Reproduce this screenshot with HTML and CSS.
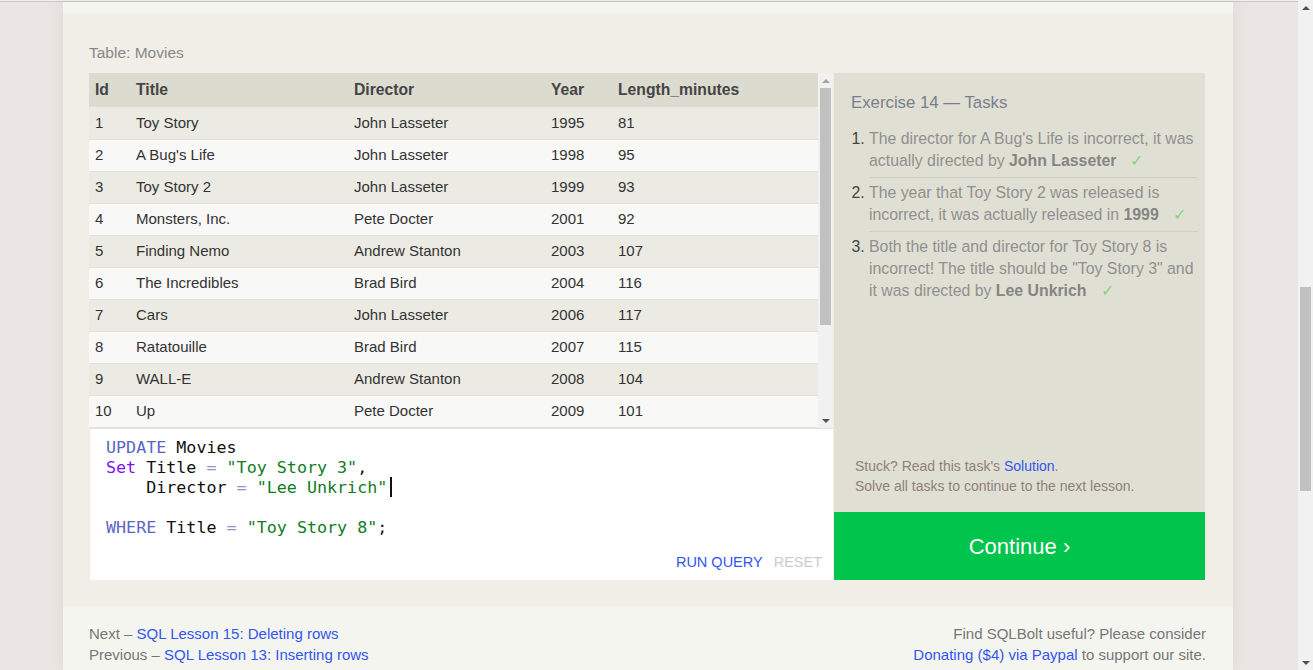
FILE: index.html
```html
<!DOCTYPE html>
<html lang="en">
<head>
<meta charset="utf-8">
<title>SQLBolt - Lesson 14</title>
<link rel="stylesheet" href="styles.css">
</head>
<body>
<div class="viewport">
  <div class="topline"></div>
  <div class="container">
    <div class="lesson">
      <div class="table-label">Table: Movies</div>
      <div class="exercise">
        <div class="left">
          <div class="tablewrap">
            <div class="tableclip">
              <table class="movies">
                <colgroup>
                  <col class="c-id"><col class="c-title"><col class="c-dir"><col class="c-year"><col>
                </colgroup>
                <thead>
                  <tr><th>Id</th><th>Title</th><th>Director</th><th>Year</th><th>Length_minutes</th></tr>
                </thead>
                <tbody>
                  <tr><td>1</td><td>Toy Story</td><td>John Lasseter</td><td>1995</td><td>81</td></tr>
                  <tr><td>2</td><td>A Bug's Life</td><td>John Lasseter</td><td>1998</td><td>95</td></tr>
                  <tr><td>3</td><td>Toy Story 2</td><td>John Lasseter</td><td>1999</td><td>93</td></tr>
                  <tr><td>4</td><td>Monsters, Inc.</td><td>Pete Docter</td><td>2001</td><td>92</td></tr>
                  <tr><td>5</td><td>Finding Nemo</td><td>Andrew Stanton</td><td>2003</td><td>107</td></tr>
                  <tr><td>6</td><td>The Incredibles</td><td>Brad Bird</td><td>2004</td><td>116</td></tr>
                  <tr><td>7</td><td>Cars</td><td>John Lasseter</td><td>2006</td><td>117</td></tr>
                  <tr><td>8</td><td>Ratatouille</td><td>Brad Bird</td><td>2007</td><td>115</td></tr>
                  <tr><td>9</td><td>WALL-E</td><td>Andrew Stanton</td><td>2008</td><td>104</td></tr>
                  <tr><td>10</td><td>Up</td><td>Pete Docter</td><td>2009</td><td>101</td></tr>
                  <tr><td>11</td><td>Toy Story 8</td><td>El Directore</td><td>2010</td><td>103</td></tr>
                  <tr><td>12</td><td>Cars 2</td><td>John Lasseter</td><td>2011</td><td>120</td></tr>
                  <tr><td>13</td><td>Brave</td><td>Brenda Chapman</td><td>2012</td><td>102</td></tr>
                  <tr><td>14</td><td>Monsters University</td><td>Dan Scanlon</td><td>2013</td><td>110</td></tr>
                </tbody>
              </table>
            </div>
            <div class="vscroll table-scroll">
              <div class="arrow up dim"></div>
              <div class="track"><div class="thumb"></div></div>
              <div class="arrow down"></div>
            </div>
          </div>
          <div class="editor">
            <div class="code">
              <div class="line"><span class="kw">UPDATE</span> Movies</div>
              <div class="line"><span class="kw2">Set</span> Title <span class="op">=</span> <span class="str">"Toy Story 3"</span>,</div>
              <div class="line">    Director <span class="op">=</span> <span class="str">"Lee Unkrich"</span><span class="cursor"></span></div>
              <div class="line"> </div>
              <div class="line"><span class="kw">WHERE</span> Title <span class="op">=</span> <span class="str">"Toy Story 8"</span>;</div>
            </div>
            <div class="actions">
              <span class="run">RUN QUERY</span>
              <span class="reset">RESET</span>
            </div>
          </div>
        </div>
        <div class="right">
          <div class="tasks">
            <h2 class="tasks-title">Exercise 14 — Tasks</h2>
            <ol class="task-list">
              <li>The director for A Bug's Life is incorrect, it was actually directed by <b>John Lasseter</b><span class="check">✓</span></li>
              <li>The year that Toy Story 2 was released is incorrect, it was actually released in <b>1999</b><span class="check">✓</span></li>
              <li>Both the title and director for Toy Story 8 is incorrect! The title should be "Toy Story 3" and it was directed by <b>Lee Unkrich</b><span class="check">✓</span></li>
            </ol>
            <div class="stuck">
              <div>Stuck? Read this task's <a class="link" href="#">Solution</a>.</div>
              <div>Solve all tasks to continue to the next lesson.</div>
            </div>
          </div>
          <a class="continue" href="#">Continue ›</a>
        </div>
      </div>
    </div>
    <div class="footer">
      <div class="nav">
        <div>Next – <a class="link" href="#">SQL Lesson 15: Deleting rows</a></div>
        <div>Previous – <a class="link" href="#">SQL Lesson 13: Inserting rows</a></div>
      </div>
      <div class="support">
        <div>Find SQLBolt useful? Please consider</div>
        <div><a class="link" href="#">Donating ($4) via Paypal</a> to support our site.</div>
      </div>
    </div>
  </div>
</div>
<div class="vscroll page-scroll">
  <div class="arrow up"></div>
  <div class="track"><div class="thumb"></div></div>
  <div class="arrow down"></div>
</div>
</body>
</html>
```
FILE: styles.css
```css
* { box-sizing: border-box; }

html, body {
  margin: 0;
  padding: 0;
  height: 670px;
  overflow: hidden;
}

body {
  display: flex;
  font-family: "Liberation Sans", Arial, sans-serif;
  color: #777;
  background: #ebe6e3;
}

.viewport {
  flex: 1;
  display: flex;
  flex-direction: column;
  background: #ebe6e3;
  overflow: hidden;
}

.topline {
  height: 2px;
  border-top: 1px solid #f1f1ee;
  background: #c8c8c8;
  flex: none;
}

.container {
  width: 1170px;
  margin-left: 63px;
  background: #f5f5f0;
  padding-top: 12px;
  box-shadow: 0 0 12px rgba(120, 100, 90, 0.12);
  flex: 1;
}

.lesson {
  background: #f0eee7;
  padding: 29px 28px 27px 26px;
}

.table-label {
  font-size: 15.5px;
  line-height: 20px;
  color: #888;
  margin-bottom: 10px;
}

.exercise {
  display: flex;
}

.left {
  width: 744px;
  display: flex;
  flex-direction: column;
}

.tablewrap {
  display: flex;
  height: 355px;
}

.tableclip {
  width: 729px;
  overflow: hidden;
}

.movies {
  width: 729px;
  border-collapse: collapse;
  table-layout: fixed;
}

.c-id { width: 41px; }
.c-title { width: 218px; }
.c-dir { width: 197px; }
.c-year { width: 67px; }

.movies th {
  height: 34px;
  background: #dcdbcf;
  color: #454545;
  font-size: 15.7px;
  font-weight: bold;
  text-align: left;
  padding: 0 6px;
}

.movies td {
  height: 32px;
  padding: 0 6px 1px;
  font-size: 15px;
  color: #333;
  border-bottom: 1px solid #e3e1d8;
  white-space: nowrap;
}

.movies tbody tr:nth-child(odd) td { background: #ecebe3; }
.movies tbody tr:nth-child(even) td { background: #f8f8f6; }

/* scrollbars */
.vscroll {
  width: 15px;
  flex: none;
  background: #f1f1f1;
  display: flex;
  flex-direction: column;
}

.vscroll .arrow {
  height: 15px;
  display: flex;
  align-items: center;
  justify-content: center;
  flex: none;
}

.vscroll .arrow::before {
  content: "";
  width: 0;
  height: 0;
  border-left: 4px solid transparent;
  border-right: 4px solid transparent;
}

.vscroll .arrow.up::before { border-bottom: 4px solid #505050; }
.vscroll .arrow.down::before { border-top: 4px solid #505050; }
.vscroll .arrow.up.dim::before { border-bottom-color: #a3a3a3; }

.vscroll .track {
  flex: 1;
}

.vscroll .thumb {
  width: 11px;
  margin-left: 2px;
  background: #c1c1c1;
}

.table-scroll .thumb {
  height: 237px;
}

.page-scroll {
  height: 670px;
}

.page-scroll .thumb {
  margin-top: 272px;
  height: 204px;
}

/* editor */
.editor {
  height: 152px;
  background: #fff;
  border-top: 1px solid #e4e2d9;
  border-left: 1px solid #ecebe5;
  display: flex;
  flex-direction: column;
}

.code {
  flex: 1;
  padding: 8px 0 0 16px;
  font-family: "DejaVu Sans Mono", "Liberation Mono", monospace;
  font-size: 16.7px;
  color: #111;
}

.line {
  height: 20px;
  line-height: 20px;
  white-space: pre;
}

.kw { color: #5a66c6; }
.kw2 { color: #7a14f5; }
.op { color: #8d93c6; }
.str { color: #127c1f; }

.cursor {
  display: inline-block;
  width: 2px;
  height: 20px;
  background: #111;
  vertical-align: top;
  margin-left: 3px;
}

.actions {
  display: flex;
  justify-content: flex-end;
  gap: 11px;
  padding: 0 11px 8px 0;
  font-size: 14.5px;
  line-height: 20px;
}

.run { color: #3355ee; }
.reset { color: #cccccc; }

/* right panel */
.right {
  width: 372px;
  display: flex;
  flex-direction: column;
  padding-left: 1px;
}

.tasks {
  flex: 1;
  background: #e0dfd3;
  padding: 18px 7px 16px 17px;
  display: flex;
  flex-direction: column;
}

.tasks-title {
  margin: 0;
  font-size: 16.8px;
  font-weight: normal;
  line-height: 24px;
  color: #7a7e8c;
}

.task-list {
  margin: 9px 0 0 0;
  padding-left: 18px;
  font-size: 15.85px;
  line-height: 22px;
  color: #909090;
}

.task-list li {
  padding: 4px 0 5px;
  border-bottom: 1px solid #cfcec3;
}

.task-list li:last-child { border-bottom: none; }

.task-list li::marker { color: #444; }

.task-list b { color: #858585; }

.check {
  color: #7fd684;
  font-size: 16px;
  margin-left: 14px;
}

.stuck {
  margin-top: auto;
  padding-left: 4px;
  font-size: 14px;
  line-height: 20px;
  color: #8e817c;
}

.link {
  color: #3355ee;
  text-decoration: none;
}

.continue {
  height: 68px;
  flex: none;
  background: #00c44c;
  color: #fff;
  font-size: 22px;
  line-height: 26px;
  padding-top: 2px;
  text-decoration: none;
  display: flex;
  align-items: center;
  justify-content: center;
}

/* footer */
.footer {
  display: flex;
  justify-content: space-between;
  padding: 16px 27px 0 26px;
  font-size: 15px;
  line-height: 21px;
  color: #777;
}

.support { text-align: right; }
```
